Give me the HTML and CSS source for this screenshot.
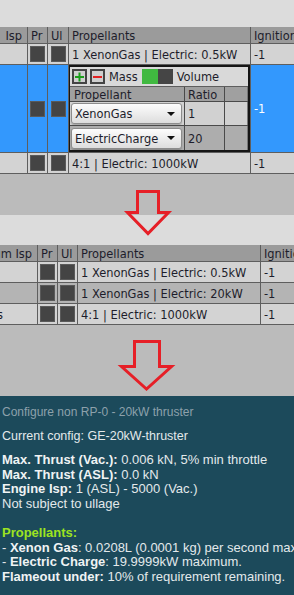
FILE: index.html
```html
<!DOCTYPE html>
<html lang="en">
<head>
    <meta charset="UTF-8">
    <meta name="viewport" content="width=device-width, initial-scale=1.0">
    <title>Engine config</title>
    <link rel="stylesheet" href="styles.css">
</head>
<body>
    <div class="top-strip"></div>

    <div class="grid grid-before">
        <div class="row row-head">
            <div class="cell cell-isp">Isp</div>
            <div class="cell">Pr</div>
            <div class="cell">Ul</div>
            <div class="cell">Propellants</div>
            <div class="cell">Ignitions</div>
        </div>
        <div class="row row-light">
            <div class="cell cell-isp"></div>
            <div class="cell cell-box"><span class="check"></span></div>
            <div class="cell cell-box"><span class="check"></span></div>
            <div class="cell">1 XenonGas | Electric: 0.5kW</div>
            <div class="cell">-1</div>
        </div>
        <div class="row row-selected">
            <div class="cell cell-isp"></div>
            <div class="cell cell-box"><span class="check"></span></div>
            <div class="cell cell-box"><span class="check"></span></div>
            <div class="cell cell-panel">
                <div class="editor">
                    <div class="editor-bar">
                        <span class="tool tool-add"></span>
                        <span class="tool tool-remove"></span>
                        <span class="bar-label">Mass</span>
                        <span class="toggle"><span class="toggle-on"></span><span class="toggle-off"></span></span>
                        <span class="bar-label">Volume</span>
                    </div>
                    <div class="sub-row sub-head">
                        <div class="sub-cell">Propellant</div>
                        <div class="sub-cell">Ratio</div>
                        <div class="sub-cell"></div>
                    </div>
                    <div class="sub-row sub-light">
                        <div class="sub-cell sub-select">
                            <div class="select">XenonGas<span class="caret"></span></div>
                        </div>
                        <div class="sub-cell">1</div>
                        <div class="sub-cell"></div>
                    </div>
                    <div class="sub-row sub-dark">
                        <div class="sub-cell sub-select">
                            <div class="select">ElectricCharge<span class="caret"></span></div>
                        </div>
                        <div class="sub-cell">20</div>
                        <div class="sub-cell"></div>
                    </div>
                </div>
            </div>
            <div class="cell cell-white">-1</div>
        </div>
        <div class="row row-light">
            <div class="cell cell-isp"></div>
            <div class="cell cell-box"><span class="check"></span></div>
            <div class="cell cell-box"><span class="check"></span></div>
            <div class="cell">4:1 | Electric: 1000kW</div>
            <div class="cell">-1</div>
        </div>
    </div>

    <div class="arrow-band arrow-band-split">
        <svg class="arrow" width="294" height="71" viewBox="0 0 294 71">
            <polygon points="137.5,17.5 158.5,17.5 158.5,38.5 168.5,38.5 148,59.5 127.5,38.5 137.5,38.5" />
        </svg>
    </div>

    <div class="grid grid-after">
        <div class="row row-head">
            <div class="cell cell-isp">Vacuum Isp</div>
            <div class="cell">Pr</div>
            <div class="cell">Ul</div>
            <div class="cell">Propellants</div>
            <div class="cell">Ignitions</div>
        </div>
        <div class="row row-light">
            <div class="cell cell-isp"></div>
            <div class="cell cell-box"><span class="check"></span></div>
            <div class="cell cell-box"><span class="check"></span></div>
            <div class="cell">1 XenonGas | Electric: 0.5kW</div>
            <div class="cell">-1</div>
        </div>
        <div class="row row-dark">
            <div class="cell cell-isp"></div>
            <div class="cell cell-box"><span class="check"></span></div>
            <div class="cell cell-box"><span class="check"></span></div>
            <div class="cell">1 XenonGas | Electric: 20kW</div>
            <div class="cell">-1</div>
        </div>
        <div class="row row-light">
            <div class="cell cell-isp"><span class="isp-tail">4200s</span></div>
            <div class="cell cell-box"><span class="check"></span></div>
            <div class="cell cell-box"><span class="check"></span></div>
            <div class="cell">4:1 | Electric: 1000kW</div>
            <div class="cell">-1</div>
        </div>
    </div>

    <div class="arrow-band">
        <svg class="arrow" width="294" height="71" viewBox="0 0 294 71">
            <polygon points="134.5,16.5 159.5,16.5 159.5,41.5 171.5,41.5 146.5,64 121.5,41.5 134.5,41.5" />
        </svg>
    </div>

    <div class="info">
        <p class="info-title">Configure non RP-0 - 20kW thruster</p>
        <p class="info-current">Current config: GE-20kW-thruster</p>
        <div class="info-lines">
            <p><b>Max. Thrust (Vac.):</b> 0.006 kN, 5% min throttle</p>
            <p><b>Max. Thrust (ASL):</b> 0.0 kN</p>
            <p><b>Engine Isp:</b> 1 (ASL) - 5000 (Vac.)</p>
            <p>Not subject to ullage</p>
            <p>&nbsp;</p>
            <p class="info-group">Propellants:</p>
            <p>- <b>Xenon Gas</b>: 0.0208L (0.0001 kg) per second max.</p>
            <p>- <b>Electric Charge</b>: 19.9999kW maximum.</p>
            <p><b>Flameout under:</b> 10% of requirement remaining.</p>
        </div>
    </div>
</body>
</html>
```

FILE: styles.css
```css
* {
    box-sizing: border-box;
}
html, body {
    margin: 0;
}
body {
    width: 294px;
    height: 595px;
    overflow: hidden;
    background-color: #bbbbbb;
    font-family: "DejaVu Sans Condensed", "DejaVu Sans", sans-serif;
    font-stretch: condensed;
    font-size: 12.7px;
    color: #1d1d2b;
}
.top-strip {
    height: 27px;
    background-color: #dcdcdc;
}

/* tables */
.row {
    display: grid;
    height: 21px;
    border-bottom: 1px solid #5e5e5e;
}
.grid-before .row {
    grid-template-columns: 28px 20px 21px 182px 1fr;
}
.grid-after .row {
    grid-template-columns: 38px 20px 20px 183px 1fr;
}
.row-head {
    background-color: #9b9b9b;
}
.row.row-head {
    height: 17px;
}
.row-light {
    background-color: #d3d3d3;
}
.row-dark {
    background-color: #b4b4b4;
}
.row-selected {
    background-color: #3398fd;
}
.row.row-selected {
    height: 88px;
}
.cell {
    display: flex;
    align-items: center;
    padding: 0 3px;
    border-right: 1px solid #5e5e5e;
    white-space: nowrap;
    overflow: hidden;
    min-width: 0;
}
.cell:last-child {
    border-right: none;
}
.cell-isp {
    justify-content: flex-end;
    padding: 0 5px 0 0;
}
.isp-tail {
    margin-right: 29px;
}
.cell-box {
    justify-content: center;
    padding: 0;
}
.check {
    display: block;
    width: 15px;
    height: 16px;
    background-color: #444444;
    border: 1px solid #5a5a5a;
}
.cell-white {
    color: #ffffff;
}
.cell-panel {
    padding: 0;
    align-items: stretch;
}

/* nested propellant editor */
.editor {
    flex: 1;
    margin-left: -1px;
    border: 2px solid #151515;
    background-color: #d9d9d9;
    display: flex;
    flex-direction: column;
}
.editor-bar {
    height: 20px;
    display: flex;
    align-items: center;
    gap: 3px;
    padding-left: 2px;
    border-bottom: 1px solid #5e5e5e;
}
.tool {
    position: relative;
    width: 15px;
    height: 15px;
    border: 2px solid #444444;
    background-color: #cfcfcf;
}
.tool-add::before,
.tool-add::after,
.tool-remove::before {
    content: "";
    position: absolute;
    left: 1px;
    top: 4.5px;
    width: 9px;
    height: 2px;
}
.tool-add::before,
.tool-add::after {
    background-color: #1b9e1b;
}
.tool-add::after {
    transform: rotate(90deg);
}
.tool-remove::before {
    background-color: #e32222;
}
.bar-label {
    margin: 0 1px;
}
.toggle {
    display: flex;
    height: 15px;
}
.toggle-on {
    width: 16px;
    background-color: #40b940;
}
.toggle-off {
    width: 15px;
    background-color: #454545;
}
.sub-row {
    display: grid;
    grid-template-columns: 115px 40px 1fr;
    border-bottom: 1px solid #4a4a4a;
    height: 24px;
}
.sub-row:last-child {
    border-bottom: none;
}
.sub-head {
    height: 15px;
    background-color: #a0a0a0;
}
.sub-light {
    background-color: #d1d1d1;
}
.sub-dark {
    background-color: #adadad;
}
.sub-cell {
    display: flex;
    align-items: center;
    padding: 0 3px;
    border-right: 1px solid #4a4a4a;
    white-space: nowrap;
    overflow: hidden;
}
.sub-head .sub-cell:first-child {
    padding-left: 4px;
}
.sub-cell:last-child {
    border-right: 1px solid #777777;
}
.sub-select {
    padding: 0 2px 0 1px;
}
.select {
    flex: 1;
    height: 21px;
    display: flex;
    align-items: center;
    justify-content: space-between;
    padding: 0 6px 0 3px;
    border: 1px solid #8c8c8c;
    border-radius: 3px;
    background: linear-gradient(#fdfdfd, #dddddd);
    box-shadow: 0 1px 1px rgba(0, 0, 0, 0.2);
}
.caret {
    flex: none;
    width: 0;
    height: 0;
    border-left: 4px solid transparent;
    border-right: 4px solid transparent;
    border-top: 4px solid #111111;
}

/* red arrows between the screenshots */
.arrow-band {
    height: 71px;
}
.arrow-band-split {
    background: linear-gradient(#bbbbbb 41px, #dcdcdc 41px);
}
.arrow {
    display: block;
}
.arrow polygon {
    fill: none;
    stroke: #e61f27;
    stroke-width: 3;
}

/* part info */
.info {
    height: 199px;
    padding: 9px 0 0 2px;
    background-color: #1c4a5b;
    background-image: radial-gradient(circle at 310px 540px, rgba(110, 160, 170, 0.28), rgba(28, 74, 91, 0) 36px);
    font-family: "Liberation Sans", Arial, sans-serif;
    font-stretch: normal;
    font-size: 13px;
    line-height: 14.6px;
    color: #e3e9eb;
    white-space: nowrap;
}
.info p {
    margin: 0;
}
.info .info-title {
    font-size: 12px;
    color: #8da1ab;
    margin-bottom: 9px;
}
.info .info-current {
    font-size: 12.5px;
    margin-bottom: 10px;
}
.info b {
    color: #f0f3f4;
}
.info-group {
    font-weight: bold;
    color: #9de321;
}
```
